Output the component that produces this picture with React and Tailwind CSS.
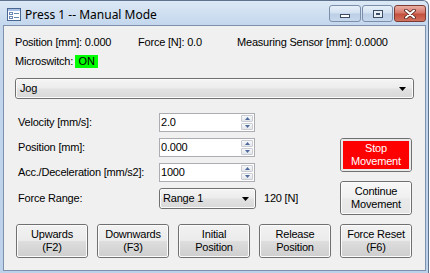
import React from "react";

const face = "bg-[linear-gradient(to_bottom,#f2f2f2_0%,#ebebeb_48%,#dddddd_52%,#cfcfcf_100%)]";
const softFace = "bg-[linear-gradient(to_bottom,#f7f7f7_0%,#f0f0f0_50%,#eaeaea_52%,#e6e6e6_100%)]";
const comboFace = "bg-[linear-gradient(to_bottom,#f4f4f4_0%,#ececec_48%,#e2e2e2_52%,#d9d9d9_100%)]";

function PushButton({ lines, className = "", inner = face, textColor = "text-black" }) {
  return (
    <div className={`h-[34px] w-[72px] rounded-[3px] border border-[#707070] ${className}`}>
      <div
        className={`flex h-full w-full flex-col items-center justify-center rounded-[2px] border border-[#fbfbfb] leading-[13px] ${inner} ${textColor}`}
      >
        {lines.map((l) => (
          <span key={l}>{l}</span>
        ))}
      </div>
    </div>
  );
}

function StopButton() {
  return (
    <div className="h-[34px] w-[72px] rounded-[3px] border border-[#707070]">
      <div className="h-full w-full rounded-[2px] border-2 border-[#e9e9e9] bg-[#ff0000]">
        <div className="flex h-full flex-col items-center justify-center leading-[13px] text-white">
          <span>Stop</span>
          <span>Movement</span>
        </div>
      </div>
    </div>
  );
}

function Arrow() {
  return (
    <svg width="7" height="4" viewBox="0 0 7 4">
      <path d="M0 0h7L3.5 4z" fill="#000" />
    </svg>
  );
}

function Combo({ text, className = "", pad = "pl-[3px] pr-[6px]" }) {
  return (
    <div className={`rounded-[3px] border border-[#707070] ${className}`}>
      <div className={`flex h-full items-center justify-between rounded-[2px] border border-[#fbfbfb] ${pad} ${comboFace}`}>
        <span>{text}</span>
        <Arrow />
      </div>
    </div>
  );
}

function SpinHalf({ up }) {
  return (
    <div className="flex h-[7px] items-center justify-center rounded-[1px] border border-[#c9ccd2] bg-[linear-gradient(to_bottom,#f7f8fa,#e3e6ea)]">
      <svg width="5" height="3" viewBox="0 0 5 3">
        {up ? <path d="M0 3h5L2.5 0z" fill="#4e6b9c" /> : <path d="M0 0h5L2.5 3z" fill="#4e6b9c" />}
      </svg>
    </div>
  );
}

function SpinBox({ value }) {
  return (
    <div className="flex h-[19px] w-[96px] border border-[#abadb3] bg-white">
      <div className="flex-1 pl-[1px] leading-[17px]">{value}</div>
      <div className="flex w-[13px] flex-col justify-center gap-px pr-px">
        <SpinHalf up />
        <SpinHalf />
      </div>
    </div>
  );
}

function Row({ label, children }) {
  return (
    <div className="flex items-center">
      <span className="w-[141px]">{label}</span>
      {children}
    </div>
  );
}

function FormIcon() {
  return (
    <svg width="14" height="13" viewBox="0 0 14 13">
      <rect x="0.5" y="0.5" width="13" height="12" fill="#fff" stroke="#4a6794" />
      <rect x="1" y="1" width="12" height="2" fill="#a9c1e4" />
      <rect x="2.5" y="4.5" width="3" height="2" fill="#fff" stroke="#6a88b6" strokeWidth="1" />
      <rect x="2.5" y="8.5" width="3" height="2" fill="#fff" stroke="#6a88b6" strokeWidth="1" />
      <rect x="7" y="5" width="5" height="1" fill="#6a88b6" />
      <rect x="7" y="9" width="5" height="1" fill="#6a88b6" />
    </svg>
  );
}

function CaptionButtons() {
  const blue =
    "rounded-[3px] border border-[#7b8fab] bg-[linear-gradient(to_bottom,#e8f0f9_0%,#d3e1f1_45%,#bccfe6_55%,#c6d8ec_100%)]";
  return (
    <div className="mr-[2px] mt-[4px] flex h-[17px] gap-px self-start">
      <div className={`flex w-[32px] items-end justify-center pb-[3px] ${blue}`}>
        <div className="h-[4px] w-[10px] border border-[#3c4e66] bg-white" />
      </div>
      <div className={`flex w-[31px] items-center justify-center ${blue}`}>
        <div className="flex h-[8px] w-[10px] items-center justify-center border border-[#3c4e66] bg-[#e8eef6]">
          <div className="h-[2px] w-[4px] border border-[#3c4e66]" />
        </div>
      </div>
      <div className="flex w-[32px] items-center justify-center rounded-[3px] border border-[#7e3b32] bg-[linear-gradient(to_bottom,#eab0a4_0%,#d6786a_45%,#c44f3d_55%,#d0735f_100%)]">
        <svg width="12" height="10" viewBox="0 0 12 10">
          <path d="M2 1.5L10 8.5M10 1.5L2 8.5" stroke="#4a2019" strokeWidth="3.6" strokeLinecap="round" />
          <path d="M2 1.5L10 8.5M10 1.5L2 8.5" stroke="#fff" strokeWidth="2" strokeLinecap="round" />
        </svg>
      </div>
    </div>
  );
}

export default function App() {
  return (
    <div className="h-[273px] w-[430px] bg-white font-['Liberation_Sans',Arial,sans-serif] text-[11px] tracking-[-0.2px] text-black">
      <div className="flex h-full w-[429px] flex-col rounded-tr-[6px] border-r border-t border-[#5f738f] bg-[linear-gradient(to_bottom,#dce8f5_0px,#c4d7ed_24px,#bcd1ea_100%)]">
        <div className="flex h-[24px] items-start">
          <div className="ml-[7px] mt-[7px] flex items-center">
            <FormIcon />
            <span className="ml-[4px] font-['Noto_Sans',sans-serif] text-[12px] leading-[13px] tracking-normal">
              Press 1 -- Manual Mode
            </span>
          </div>
          <div className="flex-1" />
          <CaptionButtons />
        </div>

        <div className="ml-[3px] mr-[2px] flex h-[246px] flex-col border border-[#7d90ac] bg-[#f0f0f0] pl-[11px]">
          <div className="mt-[10px] flex h-[13px] items-center leading-[13px]">
            <span className="w-[123px]">Position [mm]: 0.000</span>
            <span className="w-[99px]">Force [N]: 0.0</span>
            <span>Measuring Sensor [mm]: 0.0000</span>
          </div>

          <div className="mt-[6px] flex h-[13px] items-center leading-[13px]">
            <span>Microswitch:</span>
            <span className="ml-[2px] h-[13px] w-[23px] bg-[#00ff00] text-center">ON</span>
          </div>

          <Combo text="Jog" className="mt-[10px] h-[21px] w-[399px]" />

          <div className="mt-[14px] flex">
            <div className="ml-[3px] flex w-[322px] flex-col gap-[6px]">
              <Row label="Velocity [mm/s]:">
                <SpinBox value="2.0" />
              </Row>
              <Row label="Position [mm]:">
                <SpinBox value="0.000" />
              </Row>
              <Row label="Acc./Deceleration [mm/s2]:">
                <SpinBox value="1000" />
              </Row>
              <Row label="Force Range:">
                <Combo text="Range 1" className="h-[21px] w-[97px]" pad="pl-[2px] pr-[5px]" />
                <span className="ml-[8px]">120 [N]</span>
              </Row>
            </div>
            <div className="mt-[25px] flex flex-col gap-[9px]">
              <StopButton />
              <PushButton lines={["Continue", "Movement"]} inner={softFace} />
            </div>
          </div>

          <div className="ml-[1px] mt-[9px] flex gap-[9px]">
            <PushButton lines={["Upwards", "(F2)"]} />
            <PushButton lines={["Downwards", "(F3)"]} />
            <PushButton lines={["Initial", "Position"]} />
            <PushButton lines={["Release", "Position"]} />
            <PushButton lines={["Force Reset", "(F6)"]} />
          </div>
        </div>
      </div>
    </div>
  );
}
